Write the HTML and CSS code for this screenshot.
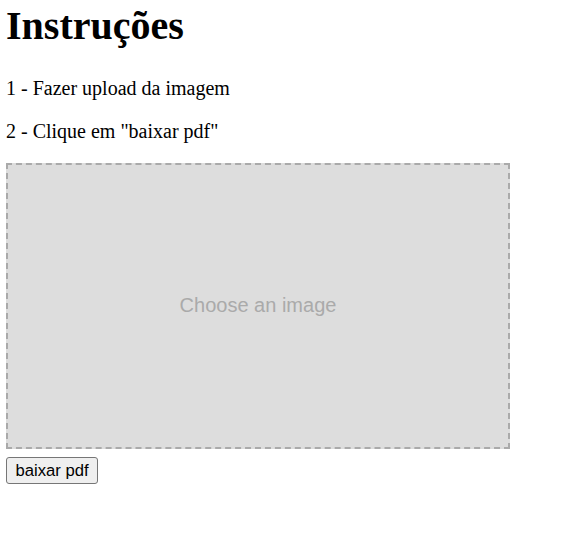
FILE: index.html
```html
<!DOCTYPE html>
<html lang="pt">
<head>
<meta charset="utf-8">
<title>Instruções</title>
<link rel="stylesheet" href="styles.css">
</head>
<body>
<h1 class="title">Instruções</h1>
<p class="step">1 - Fazer upload da imagem</p>
<p class="step">2 - Clique em "baixar pdf"</p>
<label class="dropzone">
  <span class="dropzone-text">Choose an image</span>
</label>
<button class="download" type="button">baixar pdf</button>
</body>
</html>
```
FILE: styles.css
```css
html, body {
  margin: 0;
  background: #ffffff;
}

body {
  padding: 0 6px;
  font-family: "Liberation Serif", "Times New Roman", serif;
  font-size: 20px;
  color: #000;
}

.title {
  font-size: 40px;
  font-weight: bold;
  line-height: 46px;
  margin: 3px 0 28px;
}

.step {
  margin: 20px 0;
  line-height: 23px;
}

.dropzone {
  display: flex;
  align-items: center;
  justify-content: center;
  box-sizing: border-box;
  width: 504px;
  height: 286px;
  padding-bottom: 1px;
  background: #dddddd;
  border: 2px dashed #aaaaaa;
}

.dropzone-text {
  font-family: "Liberation Sans", Arial, sans-serif;
  font-size: 20px;
  color: #aaaaaa;
}

.download {
  display: block;
  margin-top: 8px;
  height: 27px;
  padding: 0 8.5px;
  font-family: "Liberation Sans", Arial, sans-serif;
  font-size: 16.67px;
  color: #000;
  background: #efefef;
  border: 1px solid #767676;
  border-radius: 3px;
}
```
